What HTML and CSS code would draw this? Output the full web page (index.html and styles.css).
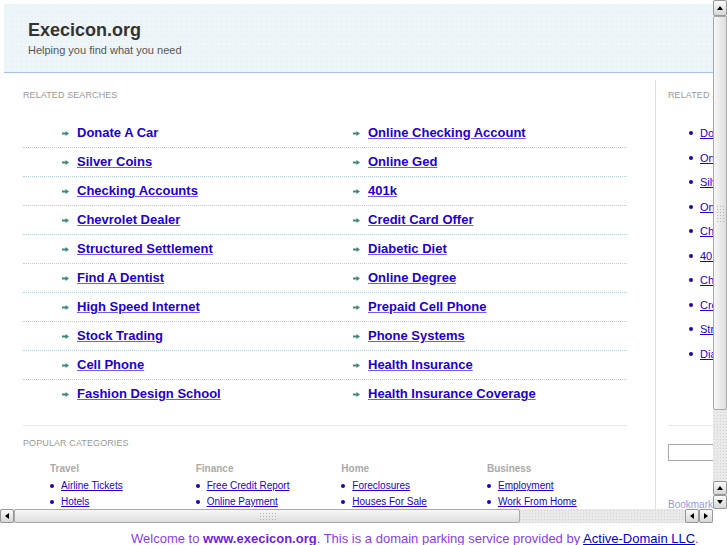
FILE: index.html
```html
<!DOCTYPE html>
<html>
<head>
<meta charset="utf-8">
<title>Execicon.org</title>
<link rel="stylesheet" href="styles.css">
</head>
<body>
<div class="frame">
  <div class="viewport">
    <div class="page">
      <div class="header">
        <h1 class="logo">Execicon.org</h1>
        <p class="tagline">Helping you find what you need</p>
      </div>
      <div class="content">
        <div class="main">
          <h2 class="label">RELATED SEARCHES</h2>
          <div class="searches">
            <div class="row">
              <a class="item plain" href="#"><svg class="arrow" viewBox="0 0 7 5" width="7" height="5"><path d="M0 1.6h3.5V0L7 2.5 3.5 5V3.4H0z"/></svg><span>Donate A Car</span></a>
              <a class="item" href="#"><svg class="arrow" viewBox="0 0 7 5" width="7" height="5"><path d="M0 1.6h3.5V0L7 2.5 3.5 5V3.4H0z"/></svg><span>Online Checking Account</span></a>
            </div>
            <div class="row">
              <a class="item" href="#"><svg class="arrow" viewBox="0 0 7 5" width="7" height="5"><path d="M0 1.6h3.5V0L7 2.5 3.5 5V3.4H0z"/></svg><span>Silver Coins</span></a>
              <a class="item" href="#"><svg class="arrow" viewBox="0 0 7 5" width="7" height="5"><path d="M0 1.6h3.5V0L7 2.5 3.5 5V3.4H0z"/></svg><span>Online Ged</span></a>
            </div>
            <div class="row">
              <a class="item" href="#"><svg class="arrow" viewBox="0 0 7 5" width="7" height="5"><path d="M0 1.6h3.5V0L7 2.5 3.5 5V3.4H0z"/></svg><span>Checking Accounts</span></a>
              <a class="item" href="#"><svg class="arrow" viewBox="0 0 7 5" width="7" height="5"><path d="M0 1.6h3.5V0L7 2.5 3.5 5V3.4H0z"/></svg><span>401k</span></a>
            </div>
            <div class="row">
              <a class="item" href="#"><svg class="arrow" viewBox="0 0 7 5" width="7" height="5"><path d="M0 1.6h3.5V0L7 2.5 3.5 5V3.4H0z"/></svg><span>Chevrolet Dealer</span></a>
              <a class="item" href="#"><svg class="arrow" viewBox="0 0 7 5" width="7" height="5"><path d="M0 1.6h3.5V0L7 2.5 3.5 5V3.4H0z"/></svg><span>Credit Card Offer</span></a>
            </div>
            <div class="row">
              <a class="item" href="#"><svg class="arrow" viewBox="0 0 7 5" width="7" height="5"><path d="M0 1.6h3.5V0L7 2.5 3.5 5V3.4H0z"/></svg><span>Structured Settlement</span></a>
              <a class="item" href="#"><svg class="arrow" viewBox="0 0 7 5" width="7" height="5"><path d="M0 1.6h3.5V0L7 2.5 3.5 5V3.4H0z"/></svg><span>Diabetic Diet</span></a>
            </div>
            <div class="row">
              <a class="item" href="#"><svg class="arrow" viewBox="0 0 7 5" width="7" height="5"><path d="M0 1.6h3.5V0L7 2.5 3.5 5V3.4H0z"/></svg><span>Find A Dentist</span></a>
              <a class="item" href="#"><svg class="arrow" viewBox="0 0 7 5" width="7" height="5"><path d="M0 1.6h3.5V0L7 2.5 3.5 5V3.4H0z"/></svg><span>Online Degree</span></a>
            </div>
            <div class="row">
              <a class="item" href="#"><svg class="arrow" viewBox="0 0 7 5" width="7" height="5"><path d="M0 1.6h3.5V0L7 2.5 3.5 5V3.4H0z"/></svg><span>High Speed Internet</span></a>
              <a class="item" href="#"><svg class="arrow" viewBox="0 0 7 5" width="7" height="5"><path d="M0 1.6h3.5V0L7 2.5 3.5 5V3.4H0z"/></svg><span>Prepaid Cell Phone</span></a>
            </div>
            <div class="row">
              <a class="item" href="#"><svg class="arrow" viewBox="0 0 7 5" width="7" height="5"><path d="M0 1.6h3.5V0L7 2.5 3.5 5V3.4H0z"/></svg><span>Stock Trading</span></a>
              <a class="item" href="#"><svg class="arrow" viewBox="0 0 7 5" width="7" height="5"><path d="M0 1.6h3.5V0L7 2.5 3.5 5V3.4H0z"/></svg><span>Phone Systems</span></a>
            </div>
            <div class="row">
              <a class="item" href="#"><svg class="arrow" viewBox="0 0 7 5" width="7" height="5"><path d="M0 1.6h3.5V0L7 2.5 3.5 5V3.4H0z"/></svg><span>Cell Phone</span></a>
              <a class="item" href="#"><svg class="arrow" viewBox="0 0 7 5" width="7" height="5"><path d="M0 1.6h3.5V0L7 2.5 3.5 5V3.4H0z"/></svg><span>Health Insurance</span></a>
            </div>
            <div class="row">
              <a class="item" href="#"><svg class="arrow" viewBox="0 0 7 5" width="7" height="5"><path d="M0 1.6h3.5V0L7 2.5 3.5 5V3.4H0z"/></svg><span>Fashion Design School</span></a>
              <a class="item" href="#"><svg class="arrow" viewBox="0 0 7 5" width="7" height="5"><path d="M0 1.6h3.5V0L7 2.5 3.5 5V3.4H0z"/></svg><span>Health Insurance Coverage</span></a>
            </div>
          </div>
          <hr class="rule">
          <h2 class="label popular">POPULAR CATEGORIES</h2>
          <div class="cats">
            <div class="cat">
              <h3>Travel</h3>
              <ul><li><a href="#">Airline Tickets</a></li><li><a href="#">Hotels</a></li></ul>
            </div>
            <div class="cat">
              <h3>Finance</h3>
              <ul><li><a href="#">Free Credit Report</a></li><li><a href="#">Online Payment</a></li></ul>
            </div>
            <div class="cat">
              <h3>Home</h3>
              <ul><li><a href="#">Foreclosures</a></li><li><a href="#">Houses For Sale</a></li></ul>
            </div>
            <div class="cat">
              <h3>Business</h3>
              <ul><li><a href="#">Employment</a></li><li><a href="#">Work From Home</a></li></ul>
            </div>
          </div>
        </div>
        <div class="side">
          <h2 class="label">RELATED SEARCHES</h2>
          <ul class="sidelist">
            <li><a href="#">Donate A Car</a></li>
            <li><a href="#">Online Checking Account</a></li>
            <li><a href="#">Silver Coins</a></li>
            <li><a href="#">Online Ged</a></li>
            <li><a href="#">Checking Accounts</a></li>
            <li><a href="#">401k</a></li>
            <li><a href="#">Chevrolet Dealer</a></li>
            <li><a href="#">Credit Card Offer</a></li>
            <li><a href="#">Structured Settlement</a></li>
            <li><a href="#">Diabetic Diet</a></li>
          </ul>
          <hr class="siderule">
          <div class="search"><input class="searchbox" type="text"></div>
          <a class="bookmark" href="#">Bookmark this page</a>
        </div>
      </div>
    </div>
  </div>
  <div class="vscroll">
    <div class="sbtn top"><i class="tri up"></i></div>
    <div class="thumb vthumb"><i class="grip vgrip"></i></div>
    <div class="track"></div>
    <div class="sbtn"><i class="tri up"></i></div>
    <div class="sbtn"><i class="tri down"></i></div>
  </div>
  <div class="hscroll">
    <div class="sbtn"><i class="tri left"></i></div>
    <div class="thumb hthumb"><i class="grip hgrip"></i></div>
    <div class="track"></div>
    <div class="sbtn"><i class="tri left"></i></div>
    <div class="sbtn"><i class="tri right"></i></div>
  </div>
  <div class="corner"></div>
</div>
<p class="footer">Welcome to <b>www.execicon.org</b>. This is a domain parking service provided by <a href="#">Active-Domain LLC</a>.</p>
</body>
</html>
```
FILE: styles.css
```css
html, body {
  margin: 0;
  padding: 0;
  background: #fff;
  font-family: "Liberation Sans", Arial, sans-serif;
}

.frame {
  display: grid;
  grid-template-columns: 713px 14px;
  grid-template-rows: 509px 14px;
}

.viewport {
  overflow: hidden;
  background: #fff;
}

.page {
  width: 900px;
  padding: 4px 0 0 4px;
}

/* header */
.header {
  background-color: #eef5f8;
  background-image: radial-gradient(#e1eaef 0.6px, transparent 0.8px);
  background-size: 5px 5px;
  border-bottom: 1px solid #a9c0e6;
  padding: 16px 24px 16px 24px;
  height: 36px;
}
.logo {
  margin: 0;
  font-size: 18px;
  line-height: 21px;
  font-weight: bold;
  color: #333;
}
.tagline {
  margin: 3px 0 0;
  font-size: 11px;
  line-height: 13px;
  color: #555;
}

/* content */
.content {
  display: flex;
  margin-top: 7px;
}
.main {
  box-sizing: border-box;
  width: 651px;
  padding: 10px 28px 0 19px;
}
.label {
  margin: 0 0 18px;
  font-size: 9px;
  line-height: 11px;
  font-weight: normal;
  color: #999;
  letter-spacing: 0.1px;
}

.searches a, .sidelist a, .cat a {
  color: #2200cc;
}

.row {
  display: grid;
  grid-template-columns: 291px 313px;
  height: 28px;
  border-bottom: 1px dotted #b7cbe6;
}
.row:last-child {
  border-bottom: none;
}
.item {
  display: flex;
  align-items: center;
  padding-left: 39px;
  font-size: 13px;
  font-weight: bold;
  line-height: 28px;
  text-decoration-color: #6d5cf0;
}
.item.plain {
  text-decoration: none;
}
.arrow {
  fill: #3b8a7c;
  margin-right: 8px;
  flex: none;
}

.rule {
  margin: 17px 0 0;
  border: none;
  border-top: 1px solid #e2eaf3;
  height: 0;
}
.label.popular {
  margin: 12px 0 14px;
}

.cats {
  display: grid;
  grid-template-columns: repeat(4, 145.67px);
  padding-left: 27px;
}
.cat h3 {
  margin: 0;
  font-size: 10px;
  line-height: 12px;
  font-weight: bold;
  color: #aaa;
}
.cat ul {
  list-style: none;
  margin: 3px 0 0;
  padding: 0;
}
.cat li {
  display: flex;
  align-items: center;
  font-size: 10px;
  line-height: 16px;
}
.cat li::before, .sidelist li::before {
  content: "";
  width: 4px;
  height: 4px;
  border-radius: 50%;
  background: #2200aa;
  margin-right: 7px;
  flex: none;
}

/* sidebar */
.side {
  border-left: 1px solid #d6e1f1;
  padding: 10px 0 0 12px;
  width: 220px;
  min-height: 470px;
}
.side .label {
  margin-bottom: 0;
}
.sidelist {
  list-style: none;
  margin: 20px 0 0;
  padding-left: 21px;
}
.sidelist li {
  display: flex;
  align-items: center;
  font-size: 11px;
  line-height: 24.5px;
  white-space: nowrap;
}
.siderule {
  margin: 59px 0 0;
  border: none;
  border-top: 1px solid #e2eaf3;
  height: 0;
}
.search {
  margin-top: 18px;
}
.searchbox {
  box-sizing: border-box;
  width: 160px;
  height: 17px;
  border: 1px solid #a8a8a8;
  padding: 0;
  margin: 0;
  display: block;
}
.bookmark {
  display: block;
  margin-top: 38px;
  font-size: 10px;
  line-height: 12px;
  color: #9999dd;
  text-decoration: none;
  white-space: nowrap;
}

/* scrollbars */
.vscroll, .hscroll {
  display: flex;
  background-color: #e9e9e9;
  background-image: radial-gradient(#d3d3d3 0.6px, transparent 0.8px);
  background-size: 3px 3px;
}
.vscroll {
  flex-direction: column;
}
.sbtn {
  box-sizing: border-box;
  width: 14px;
  height: 14px;
  border: 1px solid #979797;
  border-radius: 2px;
  background: linear-gradient(#fbfbfb, #d6d6d6);
  display: flex;
  align-items: center;
  justify-content: center;
  flex: none;
}
.sbtn.top {
  height: 16px;
}
.track {
  flex: 1;
}
.thumb {
  box-sizing: border-box;
  border: 1px solid #a9a9a9;
  border-radius: 2px;
  display: flex;
  align-items: center;
  justify-content: center;
  flex: none;
}
.vthumb {
  height: 394px;
  background: linear-gradient(90deg, #f7f7f7, #dedede);
}
.hthumb {
  width: 506px;
  background: linear-gradient(#f7f7f7, #dedede);
}
.grip {
  display: block;
  background-image: radial-gradient(#b5b5b5 0.7px, transparent 0.9px);
  background-size: 3px 3px;
}
.vgrip {
  width: 9px;
  height: 17px;
}
.hgrip {
  width: 17px;
  height: 9px;
}
.tri {
  display: block;
  width: 0;
  height: 0;
}
.tri.up {
  border-left: 3px solid transparent;
  border-right: 3px solid transparent;
  border-bottom: 4px solid #000;
}
.tri.down {
  border-left: 3px solid transparent;
  border-right: 3px solid transparent;
  border-top: 4px solid #000;
}
.tri.left {
  border-top: 3px solid transparent;
  border-bottom: 3px solid transparent;
  border-right: 4px solid #000;
}
.tri.right {
  border-top: 3px solid transparent;
  border-bottom: 3px solid transparent;
  border-left: 4px solid #000;
}
.corner {
  background: #fff;
}

/* footer */
.footer {
  margin: 8px 0 0;
  padding-left: 131px;
  font-size: 13px;
  line-height: 15px;
  color: #8a3ce6;
  white-space: nowrap;
}
.footer b {
  color: #6e1fd6;
}
.footer a {
  color: #0000cc;
}
```
